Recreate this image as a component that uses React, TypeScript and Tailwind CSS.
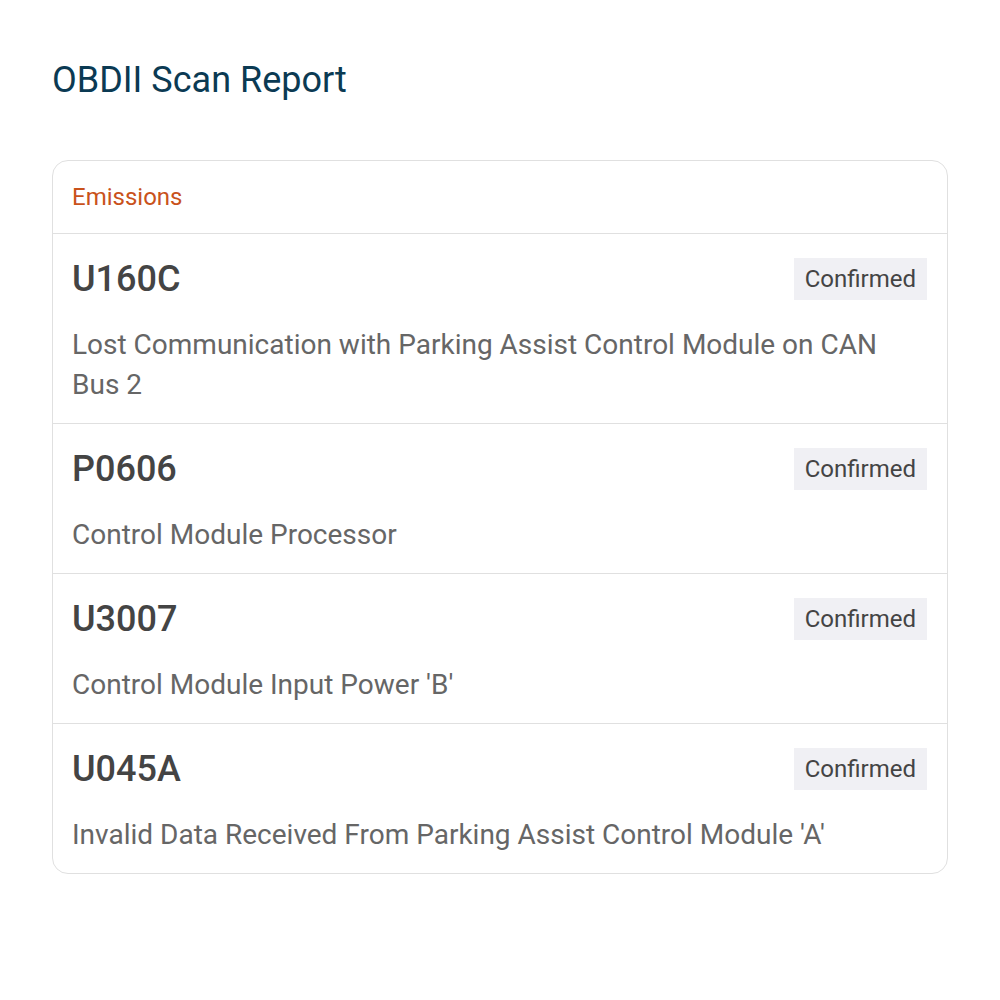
import React from "react";

const items = [
  { code: "U160C", desc: "Lost Communication with Parking Assist Control Module on CAN Bus 2" },
  { code: "P0606", desc: "Control Module Processor" },
  { code: "U3007", desc: "Control Module Input Power 'B'" },
  { code: "U045A", desc: "Invalid Data Received From Parking Assist Control Module 'A'" },
];

export default function App() {
  return (
    <div className="min-h-[1000px] bg-white px-[52px] pt-14 font-['Roboto',sans-serif]">
      <h1 className="text-[36px] leading-[48px] text-[#0b3a53]">OBDII Scan Report</h1>
      <div className="mt-14 rounded-2xl border border-[#e0e0e0] overflow-hidden">
        <div className="px-[19px] py-5 text-[24px] leading-8 text-[#c9521b]">Emissions</div>
        {items.map((it) => (
          <div key={it.code} className="border-t border-[#e0e0e0] pl-[19px] pr-5 pt-6 pb-[18px]">
            <div className="flex items-center justify-between h-[42px]">
              <span className="text-[36px] font-medium text-[#444444] leading-none">{it.code}</span>
              <span className="bg-[#f0f0f4] px-[11px] h-[42px] flex items-center text-[24px] text-[#444444]">
                Confirmed
              </span>
            </div>
            <p className="mt-[25px] text-[28px] leading-10 text-[#666666]">{it.desc}</p>
          </div>
        ))}
      </div>
    </div>
  );
}
